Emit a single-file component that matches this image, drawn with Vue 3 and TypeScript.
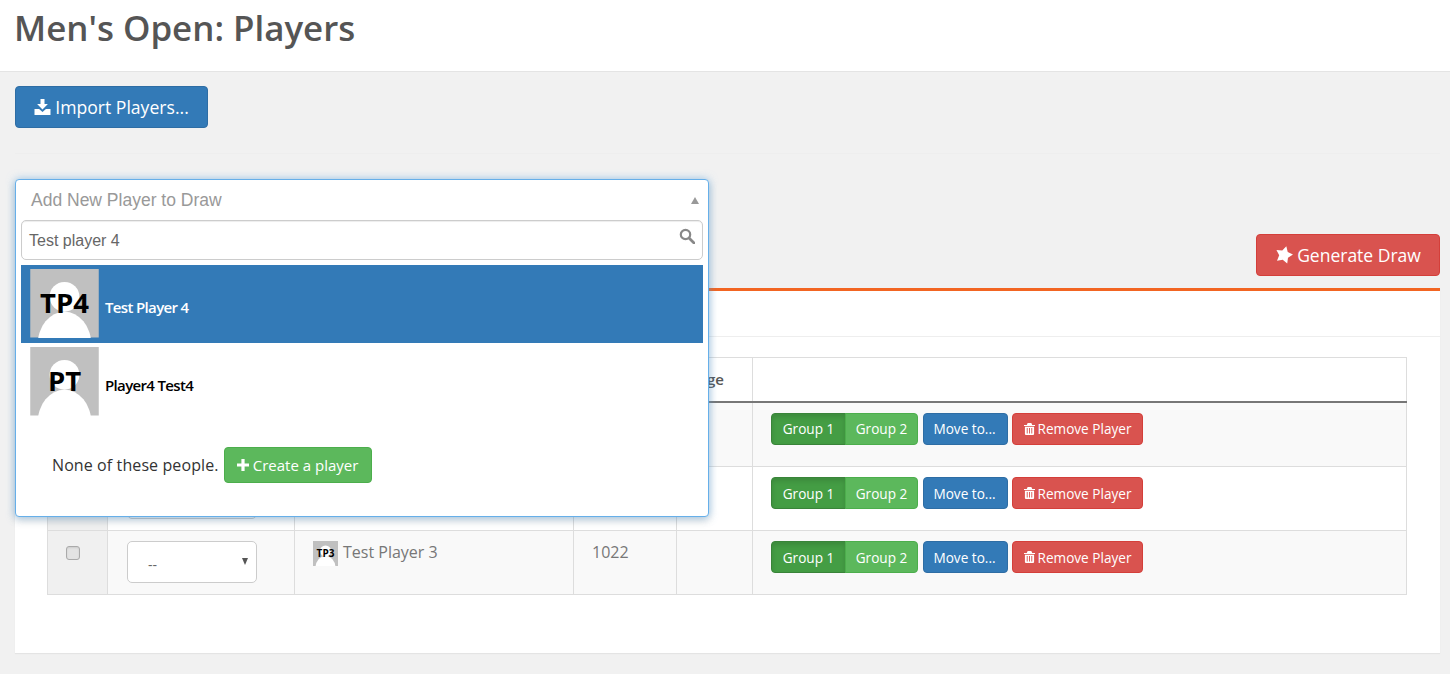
<script setup lang="ts">
interface Player { initials: string; name: string; rating: string }
const players: Player[] = [
  { initials: 'TP1', name: 'Test Player 1', rating: '1024' },
  { initials: 'TP2', name: 'Test Player 2', rating: '1023' },
  { initials: 'TP3', name: 'Test Player 3', rating: '1022' },
]
const results = [
  { initials: 'TP4', name: 'Test Player 4', active: true },
  { initials: 'PT', name: 'Player4 Test4', active: false },
]
</script>

<template>
  <div class="page">
    <header class="top"><h1>Men's Open: Players</h1></header>
    <main class="main">
      <button class="btn btn-blue btn-import">
        <svg class="ic" viewBox="0 0 16 16" width="17" height="16"><path fill="currentColor" d="M6 0h4v5h3.400L8 10.400 2.600 5H6zM0 10h4.600L8 13l3.400-3H16v6H0z"/></svg>
        Import Players...
      </button>
      <hr class="rule" />

      <div class="picker-slot">
        <div class="picker">
          <div class="picker-head">
            <span>Add New Player to Draw</span>
            <i class="tri-up"></i>
          </div>
          <div class="search">
            <span>Test player 4</span>
            <svg viewBox="0 0 16 16" width="16" height="16"><circle cx="6.500" cy="6.500" r="4.700" fill="none" stroke="#888" stroke-width="2.200"/><path d="M10 10l5 5" stroke="#888" stroke-width="2.800" stroke-linecap="round"/></svg>
          </div>
          <div v-for="r in results" :key="r.name" class="result" :class="{ active: r.active }">
            <div class="avatar avatar-lg">
              <svg viewBox="0 0 69 69"><rect width="69" height="69" fill="#c0c0c0"/><circle cx="34.500" cy="28" r="15" fill="#fff"/><ellipse cx="34.500" cy="76" rx="27" ry="33" fill="#fff"/></svg>
              <b>{{ r.initials }}</b>
            </div>
            <span class="result-name">{{ r.name }}</span>
          </div>
          <div class="none">
            <span>None of these people.</span>
            <button class="btn btn-green btn-create">
              <svg class="ic" viewBox="0 0 12 12" width="12" height="12"><path fill="currentColor" d="M4.400 0h3.200v4.400H12v3.200H7.600V12H4.400V7.600H0V4.400h4.400z"/></svg>
              Create a player
            </button>
          </div>
        </div>
      </div>

      <div class="actions">
        <button class="btn btn-red btn-generate">
          <svg class="ic" viewBox="0 0 18 18" width="18" height="18"><path fill="currentColor" d="M11.330.31l1.400 5.700 5.260 2.520-5 3.100-.76 5.770-4.500-3.700L2 14.660l2.200-5.440-2.750-5.120 5.800.42z"/></svg>
          Generate Draw
        </button>
      </div>

      <section class="panel">
        <div class="panel-head"></div>
        <div class="panel-body">
          <table class="grid">
            <colgroup>
              <col class="c1" /><col class="c2" /><col class="c3" /><col class="c4" /><col class="c5" /><col />
            </colgroup>
            <thead>
              <tr><th></th><th></th><th></th><th></th><th class="age">Age</th><th></th></tr>
            </thead>
            <tbody>
              <tr v-for="p in players" :key="p.name">
                <td class="check"><span class="box"></span></td>
                <td>
                  <div class="seed"><span>--</span><i class="tri-down"></i></div>
                </td>
                <td>
                  <div class="who">
                    <div class="avatar avatar-sm">
                      <svg viewBox="0 0 25 25"><rect width="25" height="25" fill="#c0c0c0"/><circle cx="12.500" cy="10" r="5.500" fill="#fff"/><ellipse cx="12.500" cy="27" rx="10" ry="12" fill="#fff"/></svg>
                      <b>{{ p.initials }}</b>
                    </div>
                    <span>{{ p.name }}</span>
                  </div>
                </td>
                <td class="rating">{{ p.rating }}</td>
                <td></td>
                <td>
                  <div class="row-btns">
                    <div class="pair">
                      <button class="btn sm btn-green-on">Group 1</button>
                      <button class="btn sm btn-green">Group 2</button>
                    </div>
                    <button class="btn sm btn-blue btn-move">Move to...</button>
                    <button class="btn sm btn-red btn-remove">
                      <svg viewBox="0 0 12 13" width="11" height="12"><path fill="currentColor" fill-rule="evenodd" d="M4 0h4l1 2h3v1.200H0V2h3zM1 4h10v7.600c0 .8-.6 1.400-1.400 1.400H2.400C1.600 13 1 12.400 1 11.600zm2 1.500v6h1v-6zm2.500 0v6h1v-6zm2.500 0v6h1v-6z"/></svg>
                      Remove Player
                    </button>
                  </div>
                </td>
              </tr>
            </tbody>
          </table>
        </div>
      </section>
    </main>
  </div>
</template>

<style>
html, body { margin: 0; background: #f1f1f1; }
</style>

<style scoped>
* { box-sizing: border-box; }
.page { width: 1450px; height: 674px; overflow: hidden; background: #f1f1f1; font-family: "Open Sans", sans-serif; color: #333; }
.top { height: 72px; background: #fff; border-bottom: 1px solid #e4e4e4; padding: 0 14px; }
.top h1 { margin: 0; font-size: 34.900px; line-height: 55px; font-weight: 600; color: #555; }
.main { padding: 14px 10px 0 15px; }
.btn { display: inline-flex; align-items: center; justify-content: center; border: 1px solid transparent; border-radius: 4px; color: #fff; font-family: "Open Sans", sans-serif; padding: 0; cursor: pointer; white-space: nowrap; }
.btn-blue { background: #337ab7; border-color: #2e6da4; }
.btn-green { background: #5cb85c; border-color: #4cae4c; }
.btn-red { background: #d9534f; border-color: #d43f3a; }
.btn-green-on { background: #449d44; border-color: #398439; box-shadow: inset 0 3px 5px rgba(0,0,0,.125); }
.btn-import { width: 193px; height: 42px; font-size: 17.600px; gap: 4px; }
.rule { border: 0; border-top: 1px solid #eee; margin: 25px 0; }
.picker-slot { position: relative; height: 40px; }
.picker { position: absolute; left: 0; top: 0; width: 694px; height: 338px; z-index: 5; background: #fff; border: 1px solid #66afe9; border-radius: 4px; box-shadow: 0 0 8px rgba(102,175,233,.6), 0 4px 8px rgba(0,0,0,.15); }
.picker-head { height: 40px; display: flex; align-items: center; justify-content: space-between; padding: 0 9px 0 15px; font-family: "Liberation Sans", sans-serif; font-size: 17.500px; color: #999; }
.tri-up { width: 0; height: 0; border-left: 4px solid transparent; border-right: 4px solid transparent; border-bottom: 7px solid #999; }
.search { margin: 0 5px; height: 40px; border: 1px solid #ccc; border-radius: 5px; box-shadow: inset 0 1px 1px rgba(0,0,0,.075); display: flex; align-items: center; justify-content: space-between; padding: 0 7px 8px 7px; font-family: "Liberation Sans", sans-serif; font-size: 16px; color: #666; }
.search span { padding-top: 10px; }
.result { margin: 5px 5px 0; height: 78px; padding: 4px 0 0 9px; display: flex; color: #000; }
.result + .result { margin-top: 0; }
.result.active { background: #337ab7; color: #fff; }
.result-name { margin: 26px 0 0 6px; font-size: 15px; line-height: 24px; font-weight: 600; letter-spacing: -.65px; }
.avatar { position: relative; flex: none; overflow: hidden; }
.avatar svg { display: block; width: 100%; height: 100%; }
.avatar b { position: absolute; left: 0; right: 0; text-align: center; color: #000; font-weight: 700; }
.avatar-lg { width: 69px; height: 68.500px; }
.avatar-lg b { top: 16px; font-size: 27.500px; line-height: 36px; }
.avatar-sm { width: 25px; height: 25px; }
.avatar-sm b { top: 6px; font-size: 10px; line-height: 13px; }
.none { display: flex; align-items: center; gap: 5px; margin-top: 26px; padding-left: 36px; font-size: 16px; letter-spacing: .1px; color: #333; }
.btn-create { width: 148px; height: 36px; font-size: 15px; gap: 4px; letter-spacing: 0; }
.actions { display: flex; justify-content: flex-end; margin-top: 15px; margin-bottom: 12px; }
.btn-generate { width: 184px; height: 42px; font-size: 17.500px; gap: 4px; }
.panel { background: #fff; border-top: 3px solid #f26522; height: 365px; box-shadow: 0 1px 1px rgba(0,0,0,.05); }
.panel-head { height: 46px; border-bottom: 1px solid #eee; }
.panel-body { padding: 20px 33px 0 32px; }
.grid { width: 1360px; table-layout: fixed; border-collapse: collapse; font-size: 16px; color: #777; }
.c1 { width: 60px; } .c2 { width: 187px; } .c3 { width: 279px; } .c4 { width: 103px; } .c5 { width: 76px; }
.grid th { height: 44px; border: 1px solid #ddd; border-bottom: 2px solid #777; text-align: left; padding: 0 18px; font-size: 15px; font-weight: 600; color: #555; }
.grid th.age { padding-left: 20px; }
.grid td { height: 64px; border: 1px solid #ddd; padding: 10px 18px; vertical-align: top; }
.grid tbody tr:first-child td { height: 65px; }
.grid tbody tr:nth-child(odd) td { background: #f9f9f9; }
.grid tbody td.check, .grid tbody tr:nth-child(odd) td.check { background: #f0f0f0; padding: 15px 0 0 18px; }
.box { display: block; width: 14px; height: 14px; border: 1px solid #aaa; border-radius: 3px; background: #e3e3e3; box-shadow: inset 0 1px 2px rgba(0,0,0,.1); }
.seed { width: 130px; height: 42px; margin-left: 1px; border: 1px solid #ccc; border-radius: 5px; background: #fff; display: flex; align-items: center; justify-content: space-between; padding: 4px 8px 0 20px; font-size: 14px; color: #666; }
.tri-down { width: 0; height: 0; margin-top: -5px; border-left: 3.500px solid transparent; border-right: 3.500px solid transparent; border-top: 7px solid #555; }
.who { display: flex; align-items: flex-start; gap: 5px; line-height: 22px; }
.rating { line-height: 22px; }
.row-btns { display: flex; gap: 5px; }
.btn.sm { height: 32px; font-size: 13.600px; }
.pair { display: flex; }
.pair .btn:first-child { width: 75px; border-radius: 4px 0 0 4px; }
.pair .btn:last-child { width: 73px; margin-left: -1px; border-radius: 0 4px 4px 0; }
.btn-move { width: 85px; padding-right: 2px; }
.btn-remove { width: 131px; margin-left: -1px; gap: 3px; }
</style>
